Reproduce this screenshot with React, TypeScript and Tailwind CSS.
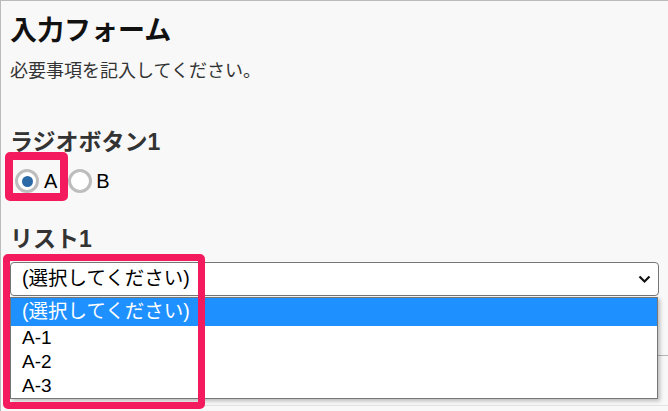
import { useState } from "react";

const options = ["(選択してください)", "A-1", "A-2", "A-3"];

export default function App() {
  // radio value and the highlighted option of the open list
  const [radio, setRadio] = useState("A");
  const [active, setActive] = useState(0);

  return (
    <div
      className="h-[411px] w-[668px] overflow-hidden border-t border-l border-[#bbbbbb] bg-[#f8f8f8] pl-[9px] pr-[9px] pt-[13px] text-[#333]"
      style={{ fontFamily: '"Liberation Sans", "Noto Sans CJK JP", sans-serif' }}
    >
      <h1 className="text-[27px] font-bold leading-[34px] text-[#111]">入力フォーム</h1>
      <p className="mt-[11px] text-[18px] leading-[24px]">必要事項を記入してください。</p>

      <h2 className="mt-[44px] text-[23px] font-bold leading-[30px]">ラジオボタン1</h2>
      <div className="mt-[6px] flex h-[36px] items-center pl-[5px] text-[20px] text-black">
        <label className="relative flex items-center" onClick={() => setRadio("A")}>
          <span className="flex h-[24px] w-[24px] items-center justify-center rounded-full border-[3px] border-[#bdbdbd] bg-white">
            {radio === "A" && <span className="h-[11px] w-[11px] rounded-full bg-[#2c69a7]" />}
          </span>
          <span className="ml-[5px]">A</span>
          {/* annotation frame */}
          <span className="pointer-events-none absolute -left-[10px] -top-[14px] h-[49px] w-[63px] rounded-[5px] border-[8px] border-[#f41a5e]" />
        </label>
        <label className="ml-[11px] flex items-center" onClick={() => setRadio("B")}>
          <span className="flex h-[24px] w-[24px] items-center justify-center rounded-full border-[3px] border-[#bdbdbd] bg-white">
            {radio === "B" && <span className="h-[11px] w-[11px] rounded-full bg-[#2c69a7]" />}
          </span>
          <span className="ml-[4px]">B</span>
        </label>
      </div>

      <h2 className="mt-[25px] text-[23px] font-bold leading-[30px]">リスト1</h2>
      <div className="relative mt-[8px]">
        <div className="flex h-[34px] items-center justify-between rounded-[4px] border border-[#767676] bg-white pl-[11px] pr-[7px] text-[19.5px] text-black">
          <span>{options[0]}</span>
          <svg width="13" height="9" viewBox="0 0 13 9" fill="none">
            <path d="M1.5 1.5 L6.5 6.5 L11.5 1.5" stroke="#111" strokeWidth="2.2" />
          </svg>
        </div>

        {/* open option list */}
        <ul className="absolute left-0 right-[1px] top-[35px] z-10 border border-[#767676] bg-white text-[19px] text-black shadow-[2px_2px_4px_rgba(0,0,0,0.25)]">
          {options.map((o, i) => (
            <li
              key={o}
              onMouseEnter={() => setActive(i)}
              className={
                (i === 0 ? "h-[28px] text-[19.5px] " : "h-[24px] ") +
                "flex items-center pl-[11px] " +
                (i === active ? "bg-[#1e90ff] text-white" : "")
              }
            >
              {o}
            </li>
          ))}
        </ul>

        {/* annotation frame */}
        <div className="pointer-events-none absolute -left-[7px] -top-[8px] z-20 h-[155px] w-[202px] rounded-[5px] border-[7px] border-[#f41a5e]" />
      </div>

      <div className="-mr-[9px] mt-[59px] h-[51px] border-t border-b border-t-[#b5b5b5] border-b-[#e2e2e2]" />
    </div>
  );
}
